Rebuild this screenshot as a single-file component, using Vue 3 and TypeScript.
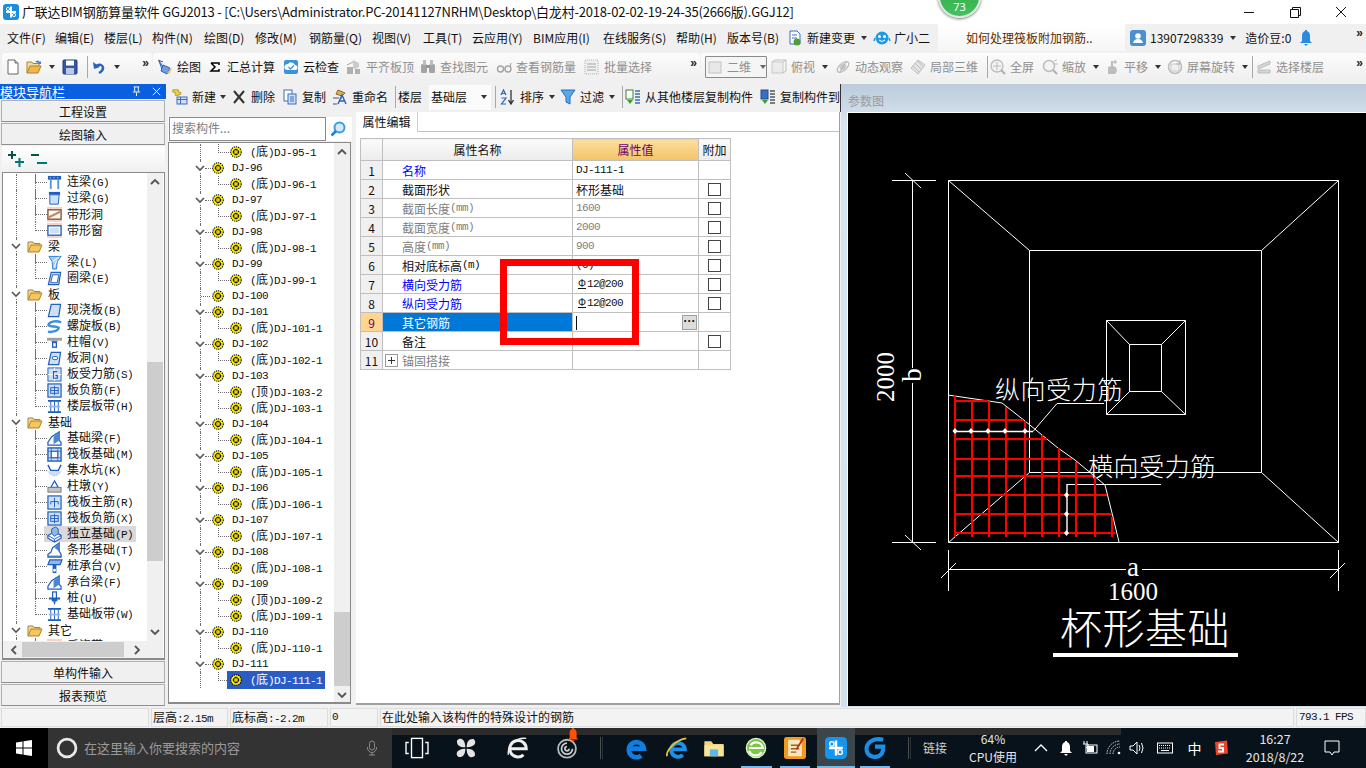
<script setup lang="ts">
const BL = '#1f5fbf'
const LB = '#cfe0f5'
const para = (f: string) => `<path d="M4.5 1.5h10l-2 13H1.5z" fill="${f}" stroke="${BL}" stroke-width="1.3"/>`
const icons: Record<string, string> = {
  lian: `<rect x="1" y="1" width="14" height="4" fill="${BL}"/><path d="M3 3h1M7 3h1M11 3h1" stroke="#fff"/><path d="M4 5v10M12 5v10" stroke="#5b93d8" stroke-width="2"/>`,
  guo: `<rect x="2" y="1" width="12" height="3" fill="${BL}"/><path d="M3 4h10l-1 10H3z" fill="${LB}" stroke="${BL}"/>`,
  dd: `<rect x="0" y="0" width="16" height="16" fill="#f6d5c8"/><rect x="1" y="3" width="14" height="10" fill="#fff" stroke="#8a4a20" stroke-width="1.4"/><path d="M2 11L14 5" stroke="#c28a5e" stroke-width="2.5"/>`,
  dc: `<rect x="0" y="0" width="16" height="16" fill="#f6d5c8"/><rect x="1" y="3" width="14" height="10" fill="#fff" stroke="${BL}" stroke-width="1.4"/><rect x="3" y="5" width="10" height="6" fill="${LB}"/>`,
  liang: `<path d="M2 1.5h13L11 7l-1 8H6L5.5 7z" fill="#a5cbf0" stroke="#2a7fd0"/><path d="M6 7l7-5M8 13l2-7" stroke="#fff"/>`,
  quan: `${para(LB)}<path d="M6 4h6.500l-1.500 8.500H4z" fill="#fff" stroke="${BL}"/>`,
  xj: para(LB),
  lx: `<path d="M15 3.500C9 1 2 3 1.500 6.500 3 9 11 7 12.500 9.500 12 12.500 6 14.500 1 13.500" fill="none" stroke="#3a8fe0" stroke-width="2.600"/>`,
  zm: `<rect x="0" y="3" width="16" height="3" fill="#a0a0a0"/><path d="M4 6h8l-2 2H6z" fill="#777"/><rect x="6" y="8" width="4" height="5" fill="#fff" stroke="${BL}" stroke-width="1.4"/>`,
  bd: `${para(LB)}<ellipse cx="8.500" cy="7.500" rx="3" ry="1.800" fill="#fff" stroke="${BL}"/>`,
  sl: `<rect x="1" y="1" width="14" height="14" fill="${LB}" stroke="${BL}"/><path d="M1 8h14M8 1v14" stroke="#fff"/><path d="M11 5H7v7h4V9H9" fill="none" stroke="${BL}" stroke-width="1.300"/>`,
  fj: `<rect x="1" y="1" width="14" height="14" fill="${LB}" stroke="${BL}" stroke-width="1.300"/><rect x="4" y="5" width="8" height="6" fill="none" stroke="${BL}"/><path d="M8 3v10M4 8h8" stroke="${BL}"/>`,
  ld: `<path d="M1 2h14M1 14h14" stroke="${BL}" stroke-width="1.800"/><path d="M4 2v12M8 2v12M12 2v12" stroke="${BL}"/><path d="M2 8h12" stroke="#8fb8e8" stroke-width="2"/>`,
  jl: `<path d="M1 15V12L5 6 13 1v9l2 2v3z" fill="#fff" stroke="${BL}" stroke-width="1.300"/><path d="M7 14V6l6-5v9z" fill="#4c86d2"/>`,
  fb: `<rect x="1" y="1" width="14" height="14" fill="${LB}" stroke="${BL}" stroke-width="1.500"/><rect x="4.500" y="4.500" width="7" height="7" fill="#fff" stroke="${BL}"/><path d="M1 4.500h14M1 11.500h14M4.500 1v14M11.500 1v14" stroke="${BL}" stroke-width=".8"/>`,
  js: `<path d="M1 2l3 6h8l3-6" fill="none" stroke="${BL}" stroke-width="1.500"/><path d="M1 9q7 9 14 0" fill="#cfe0f5" stroke="#7fa8dc" stroke-dasharray="1 1"/>`,
  zd: `<path d="M8 2l4 7H4z" fill="#fff" stroke="${BL}" stroke-width="1.300"/><rect x="1" y="9" width="14" height="5" fill="#c4c4c4" stroke="#777"/>`,
  zj: `<rect x="1" y="1" width="14" height="14" fill="${LB}" stroke="${BL}" stroke-width="1.300"/><path d="M4 7h8M8 3v10M4 7v3M12 7v3" stroke="${BL}" fill="none"/>`,
  dl: `<path d="M1 9l7-4 7 4v3l-7 4-7-4z" fill="#fff" stroke="${BL}" stroke-width="1.300"/><path d="M5 7V2l4-2 3 2v5l-4 3z" fill="#8fb8e8" stroke="${BL}"/><path d="M1 9l7 4 7-4M8 13v3" fill="none" stroke="${BL}"/>`,
  tx: `<path d="M1 15v-3l3-2 2-5 7-5v9l2 3v3z" fill="#fff" stroke="${BL}" stroke-width="1.300"/><path d="M8 5l5-5v9z" fill="#4c86d2"/><path d="M1 14h14" stroke="${BL}"/>`,
  zc: `<path d="M3 1h13l-2 5H1z" fill="#8fb8e8" stroke="${BL}" stroke-width="1.300"/><rect x="6" y="6" width="4" height="9" fill="${BL}"/><circle cx="8" cy="12" r="1.500" fill="#fff"/>`,
  zh: `<rect x="6" y="1" width="4" height="8" fill="#fff" stroke="${BL}" stroke-width="1.300"/><path d="M2 8h12M5 10h6" stroke="${BL}" stroke-width="2"/><path d="M6.500 11h3L8 15z" fill="${BL}"/>`,
  gear: `<circle cx="8" cy="8" r="6" fill="#ffee00" stroke="#000" stroke-width="1.200" stroke-dasharray="1.500 1"/><circle cx="8" cy="8" r="3" fill="none" stroke="#000"/><path d="M4 8h8M8 4v8" stroke="#000" stroke-width=".7"/><circle cx="8" cy="8" r="1.200" fill="#ffee00"/>`,
  folder: `<path d="M1 14V4h5l1 1.500h6v2" fill="#f4dca0" stroke="#a8842c"/><path d="M1 14l3-7h11l-3 7z" fill="#f6c65e" stroke="#a8842c"/>`,
  new: `<path d="M3 1h7l3 3v11H3z" fill="#fff" stroke="#666"/><path d="M10 1v3h3" fill="#ddd" stroke="#666"/>`,
  open: `<path d="M1 14V3h5l1 1.500h6V7" fill="#f4dca0" stroke="#a8842c"/><path d="M1 14l3-7h11l-3 7z" fill="#f0b84c" stroke="#a8842c"/><path d="M9 3q3-3 5 0l1-1v3h-3l1-1" fill="#3f7fd0"/>`,
  save: `<rect x="1" y="1" width="14" height="14" rx="1" fill="#3657a8" stroke="#223a78"/><rect x="4" y="1.500" width="8" height="5" fill="#fff"/><rect x="4" y="9" width="8" height="6" fill="#bcc8e4"/>`,
  undo: `<path d="M5 7q6-3 7 1.500Q12 12 8 14" fill="none" stroke="#2a62c0" stroke-width="2.500"/><path d="M2 3l1 7 6-2z" fill="#2a62c0"/>`,
  draw: `<path d="M2 2l6 8-2 3z" fill="#9ac2ea" stroke="#2a62c0"/><path d="M6 6l7 3-3 6-6-3z" fill="#6fa0dc" stroke="#2a62c0"/><path d="M1 1l5 2" stroke="#555"/><path d="M10 14l4-5 1 1-3 5z" fill="#f0c060"/>`,
  sum: `<path d="M4 4h8v2M4 4l4 4-4 4h8v-2" fill="none" stroke="#000" stroke-width="1.500"/>`,
  cloud: `<rect x="1" y="1" width="14" height="14" rx="2" fill="#3a92dc"/><path d="M4 11h8a2.500 2.500 0 0 0 0-5 4 4 0 0 0-7-1 3 3 0 0 0-1 6" fill="#fff"/><path d="M5.500 8l2 2 3.500-3.500" fill="none" stroke="#3a92dc" stroke-width="1.300"/>`,
  lvl: `<path d="M7 1l6 3v4l-4 2-2-1z" fill="#bdbdbd"/><path d="M1 15V8h6v7zM9 15v-5h5v5z" fill="#999"/><path d="M1 6l6-3" stroke="#888"/>`,
  find: `<rect x="1" y="5" width="6" height="9" rx="1.500" fill="#888"/><rect x="9" y="5" width="6" height="9" rx="1.500" fill="#888"/><rect x="3" y="1" width="3" height="5" fill="#aaa"/><rect x="10" y="1" width="3" height="5" fill="#aaa"/><rect x="6" y="6" width="4" height="3" fill="#777"/>`,
  glass: `<circle cx="4.500" cy="10" r="3" fill="none" stroke="#888" stroke-width="1.400"/><circle cx="12" cy="10" r="3" fill="none" stroke="#888" stroke-width="1.400"/><path d="M7.500 10h1.500M14 8l1-4" stroke="#888"/>`,
  batch: `<rect x="1" y="1" width="13" height="14" fill="#eee" stroke="#999" stroke-dasharray="1 1"/><path d="M3 5h9M3 8h9M3 11h9" stroke="#aaa" stroke-width="1.500"/>`,
  box2: `<rect x="1" y="3" width="11" height="11" fill="#e8e8e8" stroke="#bbb"/><path d="M1 3l3-2h11v11l-3 2M12 3l3-2" fill="none" stroke="#aaa"/>`,
  orbit: `<ellipse cx="8" cy="8" rx="7" ry="3.500" transform="rotate(-40 8 8)" fill="none" stroke="#aaa" stroke-width="1.300"/><circle cx="8" cy="8" r="3.500" fill="#bbb"/><path d="M5 13l6-10" stroke="#999"/>`,
  part: `<path d="M8 1l7 5-7 9-7-6z" fill="#ddd" stroke="#aaa"/><path d="M5 4l7 7M8 2l5 6M3 7l6 6" stroke="#aaa"/>`,
  full: `<circle cx="7" cy="7" r="6" fill="#f2f2f2" stroke="#aaa" stroke-width="1.300"/><path d="M7 3v8M3 7h8" stroke="#aaa"/><path d="M11 11l4 4" stroke="#999" stroke-width="2"/>`,
  zoom: `<circle cx="7" cy="7" r="5.500" fill="#f2f2f2" stroke="#aaa" stroke-width="1.500"/><path d="M11 11l4 4" stroke="#999" stroke-width="2"/><path d="M12 2l3-1M13 5h3" stroke="#aaa"/>`,
  pan: `<path d="M4 15V8l3-1V2h2v5l3 1 1 4-2 3z" fill="#aaa"/><path d="M11 1v4M9 3h4" stroke="#999"/>`,
  rot: `<circle cx="8" cy="8" r="6.500" fill="none" stroke="#aaa" stroke-width="1.500"/><rect x="4" y="5" width="8" height="7" fill="#eee" stroke="#bbb"/><path d="M13 1v4h-4" fill="none" stroke="#999"/>`,
  sel: `<path d="M2 7l12-5v3L2 10zM2 11h12v3H2z" fill="#ccc" stroke="#aaa"/>`,
  add: `<path d="M4 1h4v3h3v3H8v1H4V4H1V1z" fill="#f0d040" stroke="#a89020" transform="translate(0 0) scale(.8)"/><rect x="5" y="8" width="10" height="7" fill="#cfe0f5" stroke="#3a6fc0"/><path d="M5 10.500h10M8.500 8v7" stroke="#3a6fc0"/>`,
  del: `<path d="M3 2l10 12M13 2L3 14" stroke="#333" stroke-width="2"/>`,
  copy: `<rect x="2" y="1" width="8" height="11" fill="#fff" stroke="#3a6fc0"/><rect x="6" y="5" width="8" height="10" fill="#cfe0f5" stroke="#3a6fc0"/><path d="M8 8h4M8 10h4M8 12h4" stroke="#3a6fc0"/>`,
  ren: `<path d="M6 1l7 3-3 3-6-2z" fill="#e0b050" stroke="#8a6420"/><path d="M1 9h6M8 9h2" stroke="#555"/><path d="M6 15l4-9 4 9M8 12h4" fill="none" stroke="#2a62c0" stroke-width="1.500"/><path d="M1 15h4" stroke="#555"/>`,
  sort: `<path d="M1 6l2.500-5L6 6M2 4.500h3M1.500 9H6l-4.500 6H6" fill="none" stroke="#2a62c0" stroke-width="1.200"/><path d="M11 1v13M8.500 11l2.500 4 2.500-4" fill="none" stroke="#333" stroke-width="1.300"/>`,
  filter: `<path d="M1 1h14L10 8v7l-4-2V8z" fill="#5aa7e8" stroke="#1f6fc0"/>`,
  copyf: `<rect x="1" y="1" width="7" height="9" fill="#fff" stroke="#3a8030"/><path d="M2 11l3 4 3-4z" fill="#3aa030"/><path d="M10 2h5M10 5h5M10 8h5M10 11h5M10 14h5" stroke="#3a6fc0" stroke-width="1.600"/>`,
  copyt: `<rect x="1" y="1" width="7" height="9" fill="#3a6fc0" stroke="#224a90"/><path d="M2 11l3 4 3-4z" fill="#3aa030"/><path d="M10 2h5M10 5h5M10 8h5M10 11h5M10 14h5" stroke="#555" stroke-width="1.600"/>`,
  search: `<circle cx="9.500" cy="6.500" r="5" fill="#d4e9fa" stroke="#3a9ae4" stroke-width="2"/><path d="M6 10l-4.500 4.500" stroke="#1f7fd8" stroke-width="2.500"/>`,
  logo: `<rect x="0" y="0" width="16" height="16" rx="3" fill="#1b8de0"/><path d="M8 2.500v11M3 8h10" stroke="#fff" stroke-width="2"/><circle cx="5" cy="5" r="1.600" fill="none" stroke="#fff"/><circle cx="11" cy="11" r="1.600" fill="none" stroke="#fff"/>`,
  doc: `<path d="M3 1h7l3 3v10H3z" fill="#fff" stroke="#3a6fc0"/><circle cx="10" cy="12" r="3.500" fill="#4aa030"/><path d="M5 5h5M5 8h5" stroke="#3a6fc0"/>`,
  gxe: `<circle cx="8" cy="8" r="6.500" fill="#1f9ae8"/><circle cx="5.500" cy="6.500" r="1.500" fill="#fff"/><circle cx="10.500" cy="6.500" r="1.500" fill="#fff"/><path d="M5 10q3 3 6 0" stroke="#fff" fill="none"/><path d="M1 8l-1 3M15 8l1 3" stroke="#1f9ae8" stroke-width="1.500"/>`,
  user: `<rect x="0" y="0" width="16" height="16" rx="3" fill="#4a90d0"/><circle cx="8" cy="6" r="2.800" fill="#fff"/><path d="M3 13q1-4 5-4t5 4z" fill="#fff"/>`,
  bell: `<path d="M6 0h2v1q3 1 3 5v5l2 2H1l2-2V6q0-4 3-5z" fill="#2a8ae0"/><path d="M5 14h4l-2 2z" fill="#2a8ae0"/>`,
  win: `<path d="M0 2.500l6.500-1v6H0zM7.500 1.300L16 0v7.500H7.500zM0 8.500h6.500v6L0 13.500zM7.500 8.500H16V16l-8.500-1.300z" fill="#fff"/>`,
  ring: `<circle cx="8" cy="8" r="6.500" fill="none" stroke="#e8e8e8" stroke-width="2"/>`,
  mic: `<rect x="5.500" y="1" width="5" height="9" rx="2.500" fill="none" stroke="#8a8a8a"/><path d="M3.500 7v1a4.500 4.500 0 0 0 9 0V7M8 12.500V15M5 15h6" fill="none" stroke="#8a8a8a"/>`,
  tv: `<rect x="4" y="1" width="8" height="14" fill="none" stroke="#fff"/><path d="M2 4H0v8h2M14 4h2v8h-2" fill="none" stroke="#fff"/>`,
  fan: `<path d="M7.500 7.500C3 7.500 1 5.500 1.500 2.500 3.500 0 7.500 1 7.500 7.500zM8.500 7.500C8.500 3 10.500 1 13.500 1.500 16 3.500 15 7.500 8.500 7.500zM8.500 8.500C13 8.500 15 10.500 14.500 13.500 12.500 16 8.500 15 8.500 8.500zM7.500 8.500C7.500 13 5.500 15 2.500 14.500 0 12.500 1 8.500 7.500 8.500z" fill="#e4e4e4"/>`,
  ew: `<path d="M2.500 8.500h11.500a6 6 0 1 0-2 4.500" fill="none" stroke="#eee" stroke-width="2.200"/><path d="M1 13C0 7 6 0 14 1" fill="none" stroke="#eee"/>`,
  sp: `<circle cx="8" cy="8.500" r="6.500" fill="none" stroke="#bbb" stroke-width="1.300"/><path d="M12 8.500a4 4 0 1 1-4-4M9.500 8.500a1.500 1.500 0 1 1-1.500-1.500" fill="none" stroke="#ccc" stroke-width="1.300"/>`,
  edge: `<path d="M2 8.500h11a5.500 5.500 0 1 0-2 5" fill="none" stroke="#0f7ee0" stroke-width="3.400"/>`,
  ie: `<path d="M3 9h10a5 5 0 1 0-1.500 4" fill="none" stroke="#1e90e8" stroke-width="2.800"/><path d="M0 14C-1 10 6 2 14 1" fill="none" stroke="#f0c030" stroke-width="1.300"/>`,
  dir: `<path d="M1 3h5l1.500 2H15v9H1z" fill="#f4d77c"/><rect x="1" y="6" width="14" height="8" fill="#f8e39a"/><rect x="5" y="9" width="6" height="5" fill="#5cb8e8"/>`,
  grn: `<circle cx="8" cy="8" r="7" fill="#7ac943" stroke="#dff0c8"/><path d="M3 8h10a5 5 0 0 0-9-2" fill="none" stroke="#fff" stroke-width="1.600"/><path d="M3 10a5 5 0 0 0 9 1" fill="none" stroke="#fff" stroke-width="1.600"/>`,
  note: `<rect x="0" y="0" width="16" height="16" rx="2" fill="#f29a1f"/><path d="M3 2h8l2 3v9H3z" fill="#f6e6c0"/><path d="M5 6h6M5 8.500h6M5 11h4" stroke="#a06020"/><path d="M14 1l-5 8" stroke="#b03010" stroke-width="1.300"/>`,
  app: `<rect x="0" y="0" width="16" height="16" rx="3" fill="#1595ee"/><path d="M8 2.500v11M3 8h10" stroke="#fff" stroke-width="1.800"/><circle cx="5" cy="5" r="1.600" fill="none" stroke="#fff"/><circle cx="11" cy="11" r="1.600" fill="none" stroke="#fff"/>`,
  g: `<path d="M14 2C6 0 1 5 2 10c1 5 8 6 11 2 1-2 1-4 1-5H8" fill="none" stroke="#1b8ee8" stroke-width="3"/>`,
  up: `<path d="M2 11l6-6 6 6" fill="none" stroke="#fff" stroke-width="1.300"/>`,
  tbell: `<path d="M7 1h2v1q3 1 3 5v4l2 2H2l2-2V7q0-4 3-5z" fill="#fff"/><path d="M6 14h4l-2 2z" fill="#fff"/>`,
  bat: `<rect x="4" y="5" width="11" height="8" fill="none" stroke="#fff"/><rect x="5" y="6" width="7" height="6" fill="#fff"/><path d="M2 1v3M5 1v3M1 4h5v2l-2 2" stroke="#fff" fill="none"/>`,
  wifi: `<path d="M1 14a13 13 0 0 1 13-13M4 14a10 10 0 0 1 10-10M7 14a7 7 0 0 1 7-7" fill="none" stroke="#ddd" stroke-dasharray="1.500 1"/><circle cx="13" cy="13" r="1.300" fill="#fff"/>`,
  snd: `<path d="M1 6h3l4-4v12l-4-4H1z" fill="none" stroke="#fff"/><path d="M10 5q2 3 0 6M12.500 3q3 5 0 10" fill="none" stroke="#fff"/>`,
  kb: `<rect x=".5" y="3" width="15" height="10" fill="none" stroke="#fff"/><path d="M2 5.500h12M2 8h12" stroke="#fff" stroke-dasharray="1 1"/><path d="M4 10.500h8" stroke="#fff"/>`,
  sogou: `<path d="M2 2l12-1.500 1 13L3 15z" fill="#e8452c"/><path d="M11 4.500H6.500v3.500H10v3.500H5" fill="none" stroke="#fff" stroke-width="1.800"/>`,
  notif: `<path d="M1 1h14v11H10l-2 3-2-3H1z" fill="none" stroke="#fff"/>`
}

const runs = (s: string) => (s.match(/[\x00-\x7f]+|[^\x00-\x7f]+/g) || []).map(t => ({ t, lat: /^[\x00-\x7f]/.test(t) }))

const menus: [string, number][] = [['文件(F)', 48], ['编辑(E)', 49], ['楼层(L)', 48], ['构件(N)', 52], ['绘图(D)', 51], ['修改(M)', 54], ['钢筋量(Q)', 63], ['视图(V)', 51], ['工具(T)', 49], ['云应用(Y)', 61], ['BIM应用(I)', 70], ['在线服务(S)', 73], ['帮助(H)', 51], ['版本号(B)', 60]]

interface Tool { ic?: string; t?: string; w: number; caret?: boolean; off?: boolean; sep?: boolean }
const seg1: Tool[] = [{ ic: 'new', w: 21 }, { ic: 'open', w: 36, caret: true }, { ic: 'save', w: 21 }, { sep: true, w: 8 }, { ic: 'undo', w: 36, caret: true }]
const seg2: Tool[] = [{ ic: 'draw', t: '绘图', w: 50 }, { ic: 'sum', t: '汇总计算', w: 76 }, { ic: 'cloud', t: '云检查', w: 63 }, { ic: 'lvl', t: '平齐板顶', w: 74, off: true }, { ic: 'find', t: '查找图元', w: 76, off: true }, { ic: 'glass', t: '查看钢筋量', w: 88, off: true }, { ic: 'batch', t: '批量选择', w: 80, off: true }]
const seg3: Tool[] = [{ ic: 'box2', t: '俯视', w: 64, caret: true, off: true }, { ic: 'orbit', t: '动态观察', w: 75, off: true }, { ic: 'part', t: '局部三维', w: 74, off: true }, { sep: true, w: 6 }, { ic: 'full', t: '全屏', w: 52, off: true }, { ic: 'zoom', t: '缩放', w: 62, caret: true, off: true }, { ic: 'pan', t: '平移', w: 63, caret: true, off: true }, { ic: 'rot', t: '屏幕旋转', w: 82, caret: true, off: true }, { sep: true, w: 7 }, { ic: 'sel', t: '选择楼层', w: 70, off: true }]
const bar1: Tool[] = [{ ic: 'add', t: '新建', w: 59, caret: true }, { ic: 'del', t: '删除', w: 51 }, { ic: 'copy', t: '复制', w: 50 }, { ic: 'ren', t: '重命名', w: 60 }, { sep: true, w: 6 }]
const bar2: Tool[] = [{ sep: true, w: 9 }, { ic: 'sort', t: '排序', w: 60, caret: true }, { ic: 'filter', t: '过滤', w: 60, caret: true }, { sep: true, w: 5 }, { ic: 'copyf', t: '从其他楼层复制构件', w: 135 }, { ic: 'copyt', t: '复制构件到', w: 90 }]

interface NavRow { t: string; ic?: string; last?: boolean; sel?: boolean }
const navRows: NavRow[] = [
  { t: '连梁(G)', ic: 'lian' }, { t: '过梁(G)', ic: 'guo' }, { t: '带形洞', ic: 'dd' }, { t: '带形窗', ic: 'dc', last: true },
  { t: '梁' }, { t: '梁(L)', ic: 'liang' }, { t: '圈梁(E)', ic: 'quan', last: true },
  { t: '板' }, { t: '现浇板(B)', ic: 'xj' }, { t: '螺旋板(B)', ic: 'lx' }, { t: '柱帽(V)', ic: 'zm' }, { t: '板洞(N)', ic: 'bd' }, { t: '板受力筋(S)', ic: 'sl' }, { t: '板负筋(F)', ic: 'fj' }, { t: '楼层板带(H)', ic: 'ld', last: true },
  { t: '基础' }, { t: '基础梁(F)', ic: 'jl' }, { t: '筏板基础(M)', ic: 'fb' }, { t: '集水坑(K)', ic: 'js' }, { t: '柱墩(Y)', ic: 'zd' }, { t: '筏板主筋(R)', ic: 'zj' }, { t: '筏板负筋(X)', ic: 'fj' }, { t: '独立基础(P)', ic: 'dl', sel: true }, { t: '条形基础(T)', ic: 'tx' }, { t: '桩承台(V)', ic: 'zc' }, { t: '承台梁(F)', ic: 'jl' }, { t: '桩(U)', ic: 'zh' }, { t: '基础板带(W)', ic: 'ld', last: true },
  { t: '其它' }, { t: '后浇带(JD)', ic: 'dc' }
]

interface CompRow { t: string; kind: 'p' | 'c' | 'solo'; last?: boolean; sel?: boolean }
const compRows: CompRow[] = [{ t: '(底)DJ-95-1', kind: 'c', last: true }]
const addC = (n: number, subs: string[]) => {
  compRows.push({ t: `DJ-${n}`, kind: 'p' })
  subs.forEach((s, i) => compRows.push({ t: `${s}DJ-${n}-${subs.length - i}`, kind: 'c', last: i === subs.length - 1, sel: n === 111 }))
}
for (let n = 96; n <= 111; n++) {
  if (n === 100) compRows.push({ t: 'DJ-100', kind: 'solo' })
  else addC(n, n === 103 || n === 109 ? ['(顶)', '(底)'] : ['(底)'])
}

interface Prop { n: string; v: string; nc: string; vc?: string; chk: boolean; re?: boolean; plus?: boolean; sel?: boolean }
const props: Prop[] = [
  { n: '名称', v: 'DJ-111-1', nc: 'bl', chk: false },
  { n: '截面形状', v: '杯形基础', nc: '', chk: true },
  { n: '截面长度(mm)', v: '1600', nc: 'gr', vc: 'gr', chk: true },
  { n: '截面宽度(mm)', v: '2000', nc: 'gr', vc: 'gr', chk: true },
  { n: '高度(mm)', v: '900', nc: 'gr', vc: 'gr', chk: true },
  { n: '相对底标高(m)', v: '(0)', nc: '', chk: true },
  { n: '横向受力筋', v: '12@200', nc: 'bl', chk: true, re: true },
  { n: '纵向受力筋', v: '12@200', nc: 'bl', chk: true, re: true },
  { n: '其它钢筋', v: '', nc: '', chk: false, sel: true },
  { n: '备注', v: '', nc: '', chk: true },
  { n: '锚固搭接', v: '', nc: 'gr', chk: false, plus: true }
]

const redV: [number, number, number][] = [[955, 395, 537], [972, 401, 537], [989, 401, 537], [1006, 407, 537], [1025, 421, 537], [1042, 435, 537], [1059, 448, 537], [1076, 462, 537], [1095, 477, 537], [1112, 517, 537]]
const redH: [number, number, number][] = [[401, 955, 988], [420, 955, 1023], [439, 955, 1047], [459, 955, 1072], [476, 955, 1093], [495, 955, 1107], [514, 955, 1112], [533, 955, 1115]]
const dots: [number, number][] = [[955, 431], [971, 431], [988, 431], [1005, 431], [1025, 431], [1066.5, 495], [1066.5, 514], [1066.5, 533]]
const wire = 'M948.5 180.500H1338.500V542.500H948.500ZM1029.500 250.500H1261.500V472.500H1029.500ZM948.500 180.500L1029.500 250.500M1338.500 180.500L1261.500 250.500M948.500 542.500L1029.500 472.500M1338.500 542.500L1261.500 472.500M1106.500 320.500H1185.500V414.500H1106.500ZM1129.500 344.500H1161.500V391.500H1129.500ZM1106.500 320.500L1129.500 344.500M1185.500 320.500L1161.500 344.500M1106.500 414.500L1129.500 391.500M1185.500 414.500L1161.500 391.500'
const dims = 'M912.500 180V368M912.500 383V542M892 180.500H936M892 542.500H936M905 173L921 188M905 535L921 550M948.500 550V591M1338.500 550V591M948 569.500H1126M1142 569.500H1338M941 578L956 563M1330 578L1345 563M948 395L1002 403L1025 421L1042 435L1058 448L1075 460L1093 475L1105 485L1112 513L1119 542M1033 431.500L1057 403.500H1104M1067 484.500H1161'

const tasks: { ic?: string; w: number; sep?: boolean; run?: number; active?: boolean }[] = [
  { ic: 'tv', w: 49 }, { ic: 'fan', w: 50 }, { ic: 'ew', w: 54 }, { ic: 'sp', w: 44 }, { sep: true, w: 24 }, { ic: 'edge', w: 48 }, { ic: 'ie', w: 34 }, { ic: 'dir', w: 38 }, { ic: 'grn', w: 46, run: 31 }, { ic: 'note', w: 32, run: 30 }, { w: 6 }, { ic: 'app', w: 38, run: 38, active: true }, { ic: 'g', w: 40, run: 30 }, { sep: true, w: 28 }
]
const tray: [string, number][] = [['up', 24], ['tbell', 25], ['bat', 24], ['wifi', 24], ['snd', 22], ['kb', 34]]
</script>

<template>
  <div class="app">
    <div class="badge"><span>73</span></div>

    <header class="titlebar">
      <svg class="ic logo" viewBox="0 0 16 16" v-html="icons.logo"></svg>
      <span class="ttl">广联达BIM钢筋算量软件 GGJ2013 - [C:\Users\Administrator.PC-20141127NRHM\Desktop\白龙村-2018-02-02-19-24-35(2666版).GGJ12]</span>
      <div class="winbtns">
        <svg viewBox="0 0 46 24"><path d="M18 12.500h10" stroke="#111" /></svg>
        <svg viewBox="0 0 46 24"><path d="M18.500 9.500h8v8h-8zM20.500 9.500v-2h8v8h-2" fill="none" stroke="#111" /></svg>
        <svg viewBox="0 0 46 24"><path d="M18 7l10 10M28 7L18 17" stroke="#111" /></svg>
      </div>
    </header>

    <nav class="menubar">
      <span v-for="m in menus" :key="m[0]" class="mi" :style="{ width: m[1] + 'px' }">{{ m[0] }}</span>
      <svg class="ic" viewBox="0 0 16 16" v-html="icons.doc"></svg>
      <span class="mtext new">新建变更</span><i class="caret c8"></i>
      <svg class="ic gx" viewBox="0 0 16 16" v-html="icons.gxe"></svg>
      <span class="mtext gxt">广小二</span>
      <div class="msg">如何处理筏板附加钢筋..</div>
      <svg class="ic usr" viewBox="0 0 16 16" v-html="icons.user"></svg>
      <span class="mtext phone">13907298339</span><i class="caret c9"></i>
      <span class="mtext bean">造价豆:0</span>
      <svg class="ic bl" viewBox="0 0 16 16" v-html="icons.bell"></svg>
      <span class="more mm">»</span>
    </nav>

    <div class="toolbar">
      <div class="seg s1">
        <template v-for="(it, i) in seg1" :key="i">
          <span v-if="it.sep" class="sepcell" :style="{ width: it.w + 'px' }"><i class="vsep"></i></span>
          <span v-else class="tool" :style="{ width: it.w + 'px' }"><svg class="ic" viewBox="0 0 16 16" v-html="icons[it.ic!]"></svg><i v-if="it.caret" class="caret"></i></span>
        </template>
        <span class="more">»</span>
      </div>
      <div class="seg s2">
        <span v-for="(it, i) in seg2" :key="i" class="tool" :class="{ off: it.off }" :style="{ width: it.w + 'px' }">
          <svg class="ic" viewBox="0 0 16 16" v-html="icons[it.ic!]"></svg><b>{{ it.t }}</b>
        </span>
        <span class="more">»</span>
      </div>
      <div class="seg s3">
        <div class="dim2"><svg class="ic" viewBox="0 0 16 16"><rect x="2" y="3" width="12" height="11" fill="#e8e8e8" stroke="#c4c4c4" /></svg><b>二维</b><i class="caret"></i></div>
        <template v-for="(it, i) in seg3" :key="i">
          <span v-if="it.sep" class="sepcell" :style="{ width: it.w + 'px' }"><i class="vsep"></i></span>
          <span v-else class="tool off" :style="{ width: it.w + 'px' }"><svg class="ic" viewBox="0 0 16 16" v-html="icons[it.ic!]"></svg><b>{{ it.t }}</b><i v-if="it.caret" class="caret"></i></span>
        </template>
        <span class="more">»</span>
      </div>
    </div>

    <main class="work">
      <aside class="nav">
        <div class="navtitle"><span>模块导航栏</span>
          <svg viewBox="0 0 12 12" class="pin"><path d="M3 1h6M4 1v5M8 1v5M2 6.500h8M6 7v4" stroke="#fff" fill="none" /></svg>
          <svg viewBox="0 0 12 12" class="pin x"><path d="M2 2l8 8M10 2l-8 8" stroke="#fff" /></svg>
        </div>
        <button class="navbtn">工程设置</button>
        <button class="navbtn">绘图输入</button>
        <div class="navtools">
          <svg viewBox="0 0 16 16"><path d="M0 4h8M4 0v8" stroke="#054" stroke-width="2" /><path d="M7 11h9M11.500 7v9" stroke="#077" stroke-width="2" /></svg>
          <svg viewBox="0 0 16 16"><path d="M0 4h8" stroke="#054" stroke-width="2" /><path d="M6 12h10" stroke="#077" stroke-width="2" /></svg>
        </div>
        <div class="navtree">
          <div class="list nlist">
            <div v-for="r in navRows" :key="r.t" class="nrow" :class="{ cr: r.ic, folder: !r.ic, sel: r.sel }">
              <i class="g1"></i>
              <template v-if="r.ic">
                <i v-if="!r.last" class="g2"></i><i class="gl"></i>
                <svg class="ni" viewBox="0 0 16 16" v-html="icons[r.ic]"></svg>
                <span class="sim"><span v-for="(x, i) in runs(r.t)" :key="i" :class="{ lat: x.lat }">{{ x.t }}</span></span>
              </template>
              <template v-else>
                <svg class="chev" viewBox="0 0 10 10"><path d="M1 3l4 4 4-4" fill="none" stroke="#555" stroke-width="1.600" /></svg>
                <svg class="fi" viewBox="0 0 16 16" v-html="icons.folder"></svg>
                <span class="sim">{{ r.t }}</span>
              </template>
            </div>
          </div>
          <div class="vs">
            <svg viewBox="0 0 10 10"><path d="M1 7l4-4 4 4" fill="none" stroke="#555" stroke-width="1.800" /></svg>
            <div class="track nt"><div class="thumb nth"></div></div>
            <svg viewBox="0 0 10 10"><path d="M1 3l4 4 4-4" fill="none" stroke="#555" stroke-width="1.800" /></svg>
          </div>
          <div class="hs">
            <svg viewBox="0 0 10 10"><path d="M7 1L3 5l4 4" fill="none" stroke="#555" stroke-width="1.800" /></svg>
            <div class="hthumb"></div>
            <svg viewBox="0 0 10 10"><path d="M3 1l4 4-4 4" fill="none" stroke="#555" stroke-width="1.800" /></svg>
          </div>
        </div>
        <button class="navbtn b2">单构件输入</button>
        <button class="navbtn b2">报表预览</button>
      </aside>

      <section class="center">
        <div class="compbar">
          <template v-for="(it, i) in bar1" :key="i">
            <span v-if="it.sep" class="sepcell" :style="{ width: it.w + 'px' }"><i class="vsep"></i></span>
            <span v-else class="tool" :style="{ width: it.w + 'px' }"><svg class="ic" viewBox="0 0 16 16" v-html="icons[it.ic!]"></svg><b>{{ it.t }}</b><i v-if="it.caret" class="caret c4"></i></span>
          </template>
          <span class="floor">楼层</span>
          <span class="floorsel"><b>基础层</b><i class="caret"></i></span>
          <template v-for="(it, i) in bar2" :key="'b' + i">
            <span v-if="it.sep" class="sepcell" :style="{ width: it.w + 'px' }"><i class="vsep"></i></span>
            <span v-else class="tool" :style="{ width: it.w + 'px' }"><svg class="ic" viewBox="0 0 16 16" v-html="icons[it.ic!]"></svg><b>{{ it.t }}</b><i v-if="it.caret" class="caret c6"></i></span>
          </template>
        </div>
        <div class="panes">
          <div class="treepane">
            <div class="searchrow">
              <div class="searchbox">搜索构件...</div>
              <svg class="sic" viewBox="0 0 16 16" v-html="icons.search"></svg>
            </div>
            <div class="comptree">
              <div class="list clist">
                <div v-for="r in compRows" :key="r.t" class="crow" :class="r.kind">
                  <i class="cg1"></i>
                  <template v-if="r.kind === 'c'">
                    <i class="cgl"></i>
                    <svg class="gi" viewBox="0 0 16 16" v-html="icons.gear"></svg>
                    <span class="sim ct" :class="{ csel: r.sel }"><span v-for="(x, i) in runs(r.t)" :key="i" :class="{ lat: x.lat }">{{ x.t }}</span></span>
                  </template>
                  <template v-else>
                    <svg v-if="r.kind === 'p'" class="chev cc" viewBox="0 0 10 10"><path d="M1 3l4 4 4-4" fill="none" stroke="#555" stroke-width="1.600" /></svg>
                    <i v-if="r.kind === 'solo'" class="cgh"></i>
                    <i v-else class="cgs"></i>
                    <svg class="gi" viewBox="0 0 16 16" v-html="icons.gear"></svg>
                    <span class="sim pt lat">{{ r.t }}</span>
                  </template>
                </div>
              </div>
              <div class="vs cvs">
                <svg viewBox="0 0 10 10"><path d="M1 7l4-4 4 4" fill="none" stroke="#555" stroke-width="1.800" /></svg>
                <div class="track ct2"><div class="thumb cth"></div></div>
                <svg viewBox="0 0 10 10"><path d="M1 3l4 4 4-4" fill="none" stroke="#555" stroke-width="1.800" /></svg>
              </div>
            </div>
          </div>

          <div class="proppane">
            <div class="tabs"><span class="tab">属性编辑</span></div>
            <table class="grid">
              <colgroup><col class="c0" /><col class="c1" /><col class="c2" /><col class="c3" /></colgroup>
              <thead>
                <tr><th class="hn"></th><th class="hn">属性名称</th><th class="hv">属性值</th><th class="hn">附加</th></tr>
              </thead>
              <tbody>
                <tr v-for="(p, i) in props" :key="p.n" :class="{ rs: p.sel }">
                  <td class="num">{{ i + 1 }}</td>
                  <td class="name" :class="p.nc">
                    <div class="cell">
                      <i v-if="p.plus" class="plus"></i>
                      <span v-for="(x, k) in runs(p.n)" :key="k" :class="{ lat: x.lat }">{{ x.t }}</span>
                    </div>
                  </td>
                  <td class="val" :class="p.vc">
                    <div class="cell">
                      <template v-if="p.sel"><i class="cursor"></i><span class="dots">···</span></template>
                      <template v-else-if="p.re"><span class="rebar">Φ</span><span class="lat">{{ p.v }}</span></template>
                      <template v-else><span v-for="(x, k) in runs(p.v)" :key="k" :class="{ lat: x.lat }">{{ x.t }}</span></template>
                    </div>
                  </td>
                  <td class="chk"><i v-if="p.chk" class="box"></i></td>
                </tr>
              </tbody>
            </table>
            <div class="redbox"></div>
          </div>
        </div>
      </section>

      <section class="param">
        <div class="ptitle">参数图</div>
        <div class="canvas">
          <svg viewBox="848 113 518 593" class="diagram">
            <path :d="wire" fill="none" stroke="#fff" />
            <path :d="dims" fill="none" stroke="#fff" />
            <path v-for="v in redV" :key="'v' + v[0]" :d="`M${v[0]} ${v[1]}V${v[2]}`" stroke="#f00" stroke-width="2.100" />
            <path v-for="h in redH" :key="'h' + h[0]" :d="`M${h[1]} ${h[0]}H${h[2]}`" stroke="#f00" stroke-width="2.100" />
            <path d="M955 431.500H1033M1067 484V533" fill="none" stroke="#fff" stroke-width="1.400" />
            <path v-for="d in dots" :key="d[0] + '-' + d[1]" :d="`M${d[0]} ${d[1] - 3}l2.500 3-2.500 3-2.500-3z`" fill="#fff" />
            <text class="cad" x="995" y="399">纵向受力筋</text>
            <text class="cad" x="1088" y="476">横向受力筋</text>
            <text class="ser n" transform="translate(894 377) rotate(-90)" text-anchor="middle">2000</text>
            <text class="ser b" transform="translate(921 375) rotate(-90)" text-anchor="middle">b</text>
            <text class="ser b" x="1133" y="576" text-anchor="middle">a</text>
            <text class="ser n" x="1133" y="600" text-anchor="middle">1600</text>
            <text class="big" x="1060" y="644">杯形基础</text>
            <rect x="1053" y="653" width="185" height="4" fill="#fff" />
          </svg>
        </div>
      </section>
    </main>

    <footer class="status">
      <span class="st w1"></span>
      <span class="st w2"><span v-for="(x, k) in runs('层高:2.15m')" :key="k" :class="{ lat: x.lat }">{{ x.t }}</span></span>
      <span class="st w3"><span v-for="(x, k) in runs('底标高:-2.2m')" :key="k" :class="{ lat: x.lat }">{{ x.t }}</span></span>
      <span class="st w4 lat">0</span>
      <span class="st w5">在此处输入该构件的特殊设计的钢筋</span>
      <span class="st w6 lat">793.1 FPS</span>
    </footer>

    <footer class="taskbar">
      <div class="band"></div>
      <div class="start"><svg viewBox="0 0 16 16" v-html="icons.win"></svg></div>
      <div class="cortana">
        <svg class="ring" viewBox="0 0 16 16" v-html="icons.ring"></svg>
        <span>在这里输入你要搜索的内容</span>
        <svg class="micic" viewBox="0 0 16 16" v-html="icons.mic"></svg>
      </div>
      <template v-for="(t, i) in tasks" :key="i">
        <div class="tcell" :class="{ active: t.active, running: t.run }" :style="{ width: t.w + 'px', '--u': (t.run || 0) + 'px' }">
          <i v-if="t.sep" class="tsep"></i>
          <span v-else-if="t.ic" class="tic">
            <svg viewBox="0 0 16 16" v-html="icons[t.ic]"></svg>
            <svg v-if="t.ic === 'sp'" class="alarm" viewBox="0 0 16 16" v-html="icons.bell"></svg>
          </span>
        </div>
      </template>
      <span class="link">链接</span>
      <div class="cpu"><span>64%</span><span>CPU使用</span></div>
      <div v-for="x in tray" :key="x[0]" class="traycell" :style="{ width: x[1] + 'px' }"><svg viewBox="0 0 16 16" v-html="icons[x[0]]"></svg></div>
      <span class="ime">中</span>
      <div class="traycell so"><svg viewBox="0 0 16 16" v-html="icons.sogou"></svg></div>
      <div class="clock"><span>16:27</span><span>2018/8/22</span></div>
      <div class="traycell nt2"><svg viewBox="0 0 16 16" v-html="icons.notif"></svg></div>
    </footer>
  </div>
</template>

<style>
html, body { margin: 0; background: #000; }
</style>

<style scoped>
.app { width: 1366px; height: 768px; overflow: hidden; position: relative; background: #f0f0f0; font: 12px/16px "Noto Sans CJK SC", sans-serif; color: #111; display: flex; flex-direction: column; }
i { display: block; }
b { font-weight: 400; }
.ic { width: 16px; height: 16px; flex: none; display: block; overflow: visible; }
.lat { font-family: "Liberation Mono", monospace; font-size: 11px; letter-spacing: -0.6px; }
.sim { white-space: nowrap; }

.badge { position: absolute; left: 938px; top: -25px; width: 43px; height: 43px; border-radius: 50%; background: linear-gradient(#2fa040, #45c160); border: 2px solid #d9e9dc; box-sizing: border-box; box-shadow: 0 1px 3px rgba(0,0,0,.55); display: flex; align-items: flex-end; justify-content: center; color: #fff; font: 11px/12px "Noto Sans", sans-serif; padding-bottom: 3px; z-index: 3; }

.titlebar { height: 24px; background: #fff; display: flex; align-items: center; position: relative; flex: none; }
.logo { margin-left: 3px; }
.ttl { font-size: 13px; margin-left: 3px; white-space: nowrap; letter-spacing: -0.2px; }
.winbtns { margin-left: auto; display: flex; margin-right: 2px; }
.winbtns svg { width: 46px; height: 24px; display: block; }

.menubar { height: 29px; flex: none; background: #f0f0f0; display: flex; align-items: center; padding: 0 0 2px 7px; box-sizing: border-box; position: relative; }
.mi { flex: none; white-space: nowrap; }
.mtext { white-space: nowrap; flex: none; }
.new { margin-left: 4px; }
.c8 { margin-left: 6px; }
.gx { margin-left: 7px; }
.gxt { margin-left: 4px; }
.msg { margin-left: 8px; width: 187px; height: 27px; box-sizing: border-box; padding-left: 28px; background: linear-gradient(#fff, #f6f6f6); color: #5a2c00; line-height: 27px; white-space: nowrap; flex: none; font-size: 12px; }
.usr { margin-left: 5px; }
.phone { margin-left: 4px; }
.c9 { margin-left: 7px; }
.bean { margin-left: 9px; }
.bl { margin-left: 8px; }
.more { margin-left: auto; margin-right: 3px; font: bold 12px/12px "Liberation Sans", sans-serif; color: #222; align-self: flex-start; margin-top: 4px; }
.mm { margin-top: 3px; }

.caret { width: 0; height: 0; flex: none; border: 3px solid transparent; border-top: 4px solid #333; border-bottom: 0; }
.toolbar { height: 31px; flex: none; display: flex; background: #f0f0f0; }
.seg { height: 28px; margin-top: 0; background: linear-gradient(#fcfcfc, #efefef); border-radius: 3px; display: flex; align-items: center; box-sizing: border-box; flex: none; }
.s1 { width: 150px; margin-left: 2px; padding-left: 3px; margin-right: 1px; }
.s2 { width: 547px; padding-left: 4px; margin-right: 1px; }
.s3 { flex: 1 1 0; padding-left: 4px; }
.tool { flex: none; display: flex; align-items: center; white-space: nowrap; height: 24px; overflow: visible; }
.tool b { margin-left: 4px; }
.tool .caret { margin-left: 7px; }
.tool.off b { color: #8f8f8f; }
.tool.off .ic { filter: grayscale(1) opacity(.75); }
.sepcell { flex: none; display: flex; justify-content: center; align-items: center; height: 22px; }
.vsep { width: 1px; height: 22px; background: #a8a8a8; }
.dim2 { width: 62px; height: 22px; box-sizing: border-box; border: 1px solid #8a8a8a; border-radius: 1px; display: flex; align-items: center; flex: none; margin-right: 4px; padding-left: 1px; color: #8f8f8f; background: #f5f5f5; }
.dim2 b { margin-left: 4px; }
.dim2 .caret { margin-left: 9px; border-top-color: #666; }

.work { flex: 1 1 0; display: flex; min-height: 0; }
.nav { width: 166px; flex: none; margin-right: 2px; display: flex; flex-direction: column; box-sizing: border-box; }
.navtitle { height: 15px; margin-bottom: 1px; background: #0a5fe0; color: #fff; display: flex; align-items: center; font-size: 13px; line-height: 13px; flex: none; padding-bottom: 1px; box-sizing: border-box; }
.navtitle span { flex: 1 1 auto; }
.pin { width: 11px; height: 11px; display: block; flex: none; margin-right: 6px; }
.pin.x { margin-right: 4px; margin-left: 3px; }
.navbtn { height: 22px; width: 164px; flex: none; margin: 0 0 1px 1px; padding: 0; background: #f0f0f0; border: 1px solid #b0b0b0; border-bottom-color: #8f8f8f; color: #111; font: 12px "Noto Sans CJK SC", sans-serif; box-sizing: border-box; }
.navtools { height: 26px; flex: none; margin: 0 0 0 2px; width: 163px; background: linear-gradient(#fff, #f0f0f0); display: flex; align-items: center; padding-left: 6px; gap: 7px; box-sizing: border-box; }
.navtools svg { width: 16px; height: 16px; display: block; }
.navtree { height: 488px; flex: none; width: 163px; margin: 0 0 1px 2px; box-sizing: border-box; border: 1px solid #8a8a8a; border-bottom-width: 2px; background: #fff; display: grid; grid-template-columns: 144px 16px; grid-template-rows: 468px 17px; }
.list { overflow: hidden; background: #fff; }
.nlist { padding-top: 1px; box-sizing: border-box; }
.nrow { height: 16px; position: relative; display: flex; align-items: center; margin-left: -3px; }
.g1 { position: absolute; left: 16px; top: 0; bottom: 0; border-left: 1px dotted #707070; }
.g2 { position: absolute; left: 35px; top: 0; bottom: 0; border-left: 1px dotted #707070; }
.gl { position: absolute; left: 35px; top: 0; height: 8px; width: 11px; border-left: 1px dotted #707070; border-bottom: 1px dotted #707070; }
.cr { padding-left: 47px; }
.folder { padding-left: 11px; }
.ni { width: 15px; height: 15px; flex: none; display: block; margin-right: 5px; position: relative; overflow: visible; }
.chev { width: 10px; height: 10px; display: block; flex: none; position: relative; background: #fff; }
.fi { width: 16px; height: 16px; display: block; flex: none; margin-left: 6px; margin-right: 5px; }
.nrow.sel::before { content: ""; position: absolute; left: 44px; width: 92px; top: 0; bottom: 0; background: #d9d9d9; }
.nrow.sel .sim { position: relative; }
.vs { background: #f0f0f0; display: flex; flex-direction: column; align-items: center; min-height: 0; }
.vs > svg { width: 10px; height: 10px; display: block; flex: none; margin: 4px 0; }
.track { flex: 1 1 0; width: 100%; }
.nt { padding-top: 171px; box-sizing: border-box; }
.nth { height: 199px; background: #cdcdcd; }
.hs { grid-column: 1 / span 2; background: #f0f0f0; display: flex; align-items: center; padding: 0 8px 0 6px; }
.hs svg { width: 10px; height: 10px; display: block; flex: none; }
.hthumb { width: 102px; height: 15px; background: #cdcdcd; margin: 0 8px 0 3px; flex: none; }

.center { width: 673px; flex: none; display: flex; flex-direction: column; }
.compbar { height: 28px; display: flex; align-items: center; flex: none; padding: 0 0 2px 4px; white-space: nowrap; overflow: hidden; border-right: 1px solid #333; box-sizing: border-box; background: #f0f0f0; }
.c4 { margin-left: 4px !important; }
.c6 { margin-left: 5px !important; }
.floor { width: 31px; flex: none; }
.floorsel { width: 62px; height: 25px; background: #fbfbfb; display: flex; align-items: center; padding-left: 2px; box-sizing: border-box; flex: none; }
.floorsel .caret { margin-left: 14px; }
.panes { flex: 1 1 0; display: flex; min-height: 0; }
.treepane { width: 184px; flex: none; margin-right: 4px; padding-top: 5px; display: flex; flex-direction: column; box-sizing: border-box; }
.searchrow { height: 24px; display: flex; align-items: center; flex: none; background: #fff; }
.searchbox { width: 157px; height: 24px; box-sizing: border-box; margin-left: 1px; border: 1px solid #8a8a8a; background: #fff; color: #7e7e7e; padding-left: 2px; line-height: 20px; flex: none; font-size: 12px; }
.sic { width: 16px; height: 16px; display: block; margin-left: 4px; }
.comptree { flex: none; height: 562px; margin-top: 1px; width: 183px; border: 1px solid #8a8a8a; border-bottom-width: 2px; box-sizing: border-box; background: #fff; display: flex; }
.clist { width: 164px; flex: none; padding-top: 1px; box-sizing: border-box; }
.crow { height: 16px; position: relative; display: flex; align-items: center; margin-left: -1px; }
.cg1 { position: absolute; left: 32px; top: 0; bottom: 0; border-left: 1px dotted #707070; }
.crow.c { padding-left: 61px; }
.cgl { position: absolute; left: 50px; top: 0; height: 8px; width: 12px; border-left: 1px dotted #707070; border-bottom: 1px dotted #707070; }
.gi { width: 14px; height: 14px; display: block; flex: none; position: relative; }
.ct { margin-left: 7px; padding: 0 3px 0 0; line-height: 16px; }
.csel { background: #2a5cc4; color: #fff; margin-left: -16px; padding-left: 23px; position: relative; }
.crow.c:has(.csel) .gi { z-index: 1; }
.cc { margin-left: 27px; }
.cgs { width: 8px; border-bottom: 1px dotted #707070; flex: none; }
.cgh { margin-left: 33px; width: 9px; border-bottom: 1px dotted #707070; flex: none; margin-right: 1px; }
.crow.p .gi { margin-left: -2px; }
.pt { margin-left: 7px; font-size: 11px; }
.cvs { width: 16px; flex: none; margin-left: 1px; }
.ct2 { padding-top: 451px; box-sizing: border-box; }
.cth { height: 74px; background: #cdcdcd; }

.proppane { width: 484px; flex: none; background: #fff; position: relative; box-sizing: border-box; border-bottom: 2px solid #a0a0a0; border-right: 1px solid #a0a0a0; margin-bottom: 2px; }
.tabs { height: 20px; border-bottom: 1px solid #bfbfbf; box-sizing: border-box; background: #fff; }
.tab { display: block; width: 62px; height: 20px; background: #fff; border-right: 1px solid #cfcfcf; text-align: center; line-height: 20px; box-sizing: border-box; }
.grid { border-collapse: collapse; table-layout: fixed; width: 370px; margin: 6px 0 0 4px; }
.c0 { width: 22px; } .c1 { width: 190px; } .c2 { width: 126px; } .c3 { width: 32px; }
.grid th, .grid td { border: 1px solid #bfbfbf; padding: 0; height: 19px; line-height: 17px; font-weight: 400; box-sizing: border-box; overflow: hidden; white-space: nowrap; }
.grid th { height: 22px; text-align: center; }
.cell { height: 17px; display: flex; align-items: center; position: relative; }
.hn { background: linear-gradient(#fbfbfb, #ececec); }
.hv { background: linear-gradient(#fbdf9f, #f4c367); color: #6b0070; }
.num { text-align: center; background: #f0f0f0; }
.name { padding-left: 19px !important; }
.name.bl { color: #00f; }
.name.gr { color: #808080; }
.val { padding-left: 3px !important; position: relative; }
.val.gr { color: #808080; }
.rs .num { background: #ffd590; color: #6b0070; }
.rs .name { background: #0078d7; color: #fff; }
.chk { text-align: center; }
.box { width: 13px; height: 13px; border: 1px solid #444; box-sizing: border-box; margin: 0 auto 0 9px; }
.rebar { display: block; font: 10px/9px "Liberation Sans", sans-serif; border-bottom: 1px solid #111; margin: 0 1px 0 2px; }
.plus { display: block; width: 13px; height: 13px; flex: none; border: 1px solid #9a9a9a; box-sizing: border-box; margin: 0 4px 0 -17px; background: linear-gradient(#333, #333) center / 7px 1px no-repeat, linear-gradient(#333, #333) center / 1px 7px no-repeat; }
.cursor { width: 1px; height: 14px; background: #111; position: absolute; left: 0; top: 2px; }
.dots { position: absolute; right: 1px; top: 1px; width: 15px; height: 15px; background: #dcdcdc; border: 1px solid #a0a0a0; box-sizing: border-box; font: bold 12px/11px "Liberation Sans", sans-serif; text-align: center; color: #111; }
.redbox { position: absolute; left: 144px; top: 147px; width: 139px; height: 86px; box-sizing: border-box; border: 7px solid #f00; }

.param { flex: 1 1 0; background: linear-gradient(#bccbdb, #d8e4f0 40px, #d2e0ee); display: flex; flex-direction: column; padding-left: 6px; min-width: 0; }
.ptitle { height: 28px; line-height: 33px; color: #9a9a9a; padding-left: 1px; flex: none; box-sizing: border-box; }
.canvas { width: 519px; height: 594px; background: #000; border-top: 1px solid #fff; border-left: 1px solid #fff; box-sizing: border-box; flex: none; }
.diagram { display: block; width: 518px; height: 593px; }
.cad { font: 300 25px "Noto Sans CJK SC", sans-serif; letter-spacing: .6px; fill: #fff; }
.big { font: 300 42px "Noto Sans CJK SC", sans-serif; letter-spacing: .5px; fill: #fff; }
.ser { font-family: "Liberation Serif", serif; fill: #fff; }
.ser.n { font-size: 25px; }
.ser.b { font-size: 27px; }

.status { height: 21px; flex: none; display: flex; background: #f0f0f0; padding: 1px 0 0 1px; box-sizing: border-box; gap: 2px; }
.st { height: 19px; box-sizing: border-box; border: 1px solid #dcdcdc; background: #f3f3f3; line-height: 16px; white-space: nowrap; padding-left: 1px; flex: none; }
.w1 { width: 148px; } .w2 { width: 77px; } .w3 { width: 98px; } .w4 { width: 48px; } .w5 { width: 914px; } .w6 { width: 70px; padding-left: 2px; }

.taskbar { height: 40px; flex: none; background: #07121a; display: flex; align-items: center; color: #fff; position: relative; }
.band { position: absolute; left: 392px; top: 0; width: 729px; height: 7px; background: #2b2b2b; }
.start { width: 48px; height: 40px; background: #000; display: flex; align-items: center; justify-content: center; flex: none; position: relative; }
.start svg { width: 16px; height: 16px; display: block; }
.cortana { width: 344px; height: 40px; background: #333; display: flex; align-items: center; flex: none; position: relative; box-sizing: border-box; padding-left: 8px; color: #9a9a9a; font-size: 13px; }
.ring { width: 22px; height: 22px; display: block; margin-right: 6px; flex: none; }
.micic { width: 16px; height: 16px; display: block; margin-left: auto; margin-right: 12px; }
.tcell { height: 40px; flex: none; position: relative; display: flex; align-items: center; justify-content: center; }
.tcell.active { background: #3c4549; }
.running::after { content: ""; position: absolute; bottom: 0; left: 50%; width: var(--u); margin-left: calc(var(--u) / -2); height: 2px; background: #76b9ed; }
.tic { position: relative; display: block; width: 22px; height: 22px; }
.tic svg { width: 22px; height: 22px; display: block; overflow: visible; }
.tic .alarm { position: absolute; left: 11px; top: -9px; width: 14px; height: 14px; filter: hue-rotate(180deg) saturate(3); }
.tsep { width: 1px; height: 22px; border-left: 1px solid #4a4f52; border-right: 1px solid #2a2f32; }
.link { width: 45px; color: #d0d0d0; flex: none; font-size: 12px; position: relative; }
.cpu { width: 50px; flex: none; display: flex; flex-direction: column; align-items: center; font-size: 12px; line-height: 18px; color: #e8e8e8; position: relative; white-space: nowrap; margin-right: 11px; }
.traycell { height: 40px; display: flex; align-items: center; justify-content: center; flex: none; position: relative; }
.traycell svg { width: 16px; height: 16px; display: block; }
.ime { width: 25px; text-align: center; flex: none; font-size: 14px; }
.so { width: 28px; }
.clock { width: 80px; flex: none; display: flex; flex-direction: column; align-items: center; line-height: 18px; color: #e8e8e8; font-size: 12.500px; }
.nt2 { width: 34px; }
</style>
